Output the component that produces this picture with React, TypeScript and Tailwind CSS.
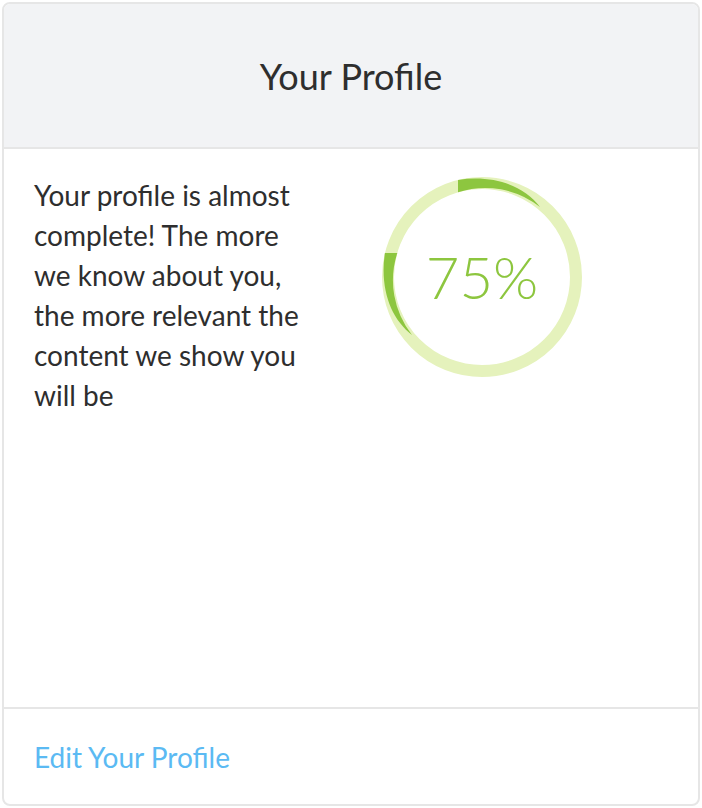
import React from "react";

export default function App() {
  const font = { fontFamily: "Lato, 'Open Sans', sans-serif" };
  return (
    <div className="w-[702px] h-[808px] bg-white p-[2px]" style={font}>
      <div className="h-[804px] border-2 border-[#e6e6e6] rounded-[8px] overflow-hidden flex flex-col">
        <div className="h-[145px] shrink-0 bg-[#f2f3f5] border-b-2 border-[#e6e6e6] flex items-center justify-center">
          <h1 className="text-[36px] leading-none text-[#2e2e2e]">Your Profile</h1>
        </div>
        <div className="flex-1 flex pl-[30px] pt-[26px] gap-[48px]">
          <p className="w-[300px] text-[28px] leading-[40px] text-[#2e2e2e]">
            Your profile is almost
            <br />
            complete! The more
            <br />
            we know about you,
            <br />
            the more relevant the
            <br />
            content we show you
            <br />
            will be
          </p>
          <div className="relative w-[200px] h-[200px] mt-[2px]">
            <svg width="200" height="200" viewBox="0 0 200 200" className="absolute inset-0">
              <circle cx="100" cy="100" r="94" fill="none" stroke="#e5f2bc" strokeWidth="12" />
              <path d="M76 2.9 C112 -2.5 142 9 158 30 A88 88 0 0 0 76 15.3 Z" fill="#8dc63f" />
              <path d="M2.9 76 C-2.5 112 9 142 30 158 A88 88 0 0 1 15.3 76 Z" fill="#8dc63f" />
            </svg>
            <div className="absolute inset-0 flex items-center justify-center">
              <span className="text-[58px] font-light leading-none text-[#8dc63f]">75%</span>
            </div>
          </div>
        </div>
        <div className="h-[97px] shrink-0 border-t-2 border-[#e6e6e6] flex items-center pl-[30px]">
          <a className="text-[28px] leading-none text-[#5bbaf3]" href="#">
            Edit Your Profile
          </a>
        </div>
      </div>
    </div>
  );
}
